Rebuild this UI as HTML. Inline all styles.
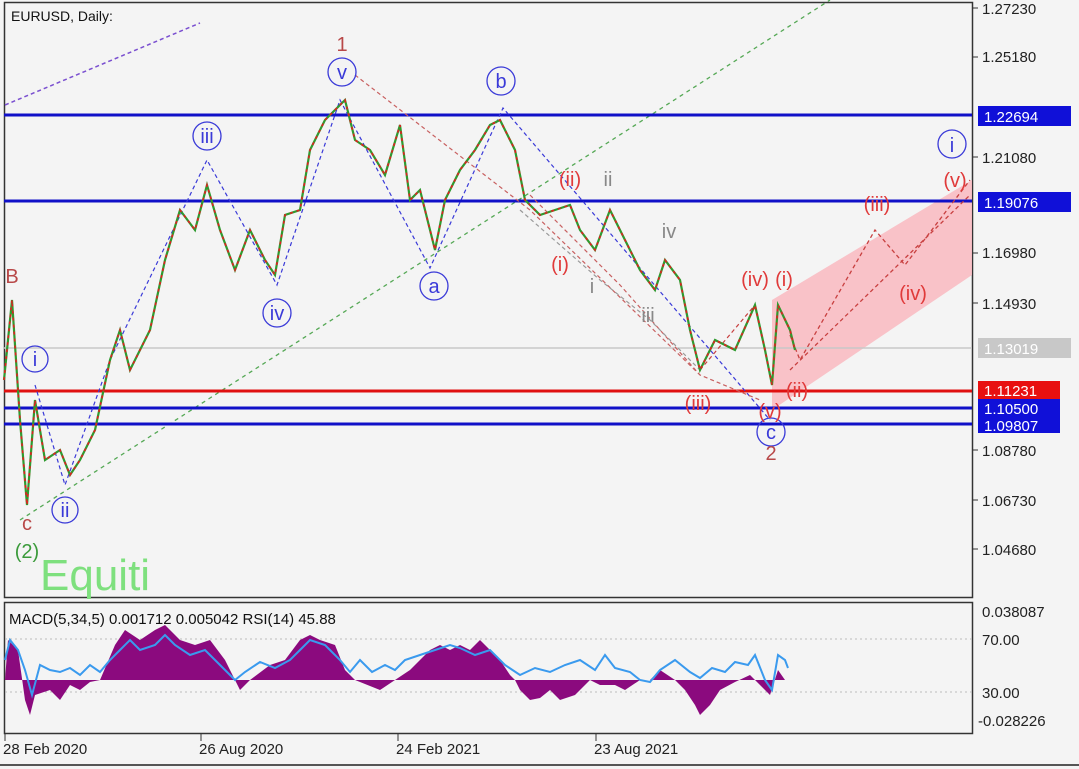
<!DOCTYPE html>
<html><head><meta charset="utf-8"><style>
html,body{margin:0;padding:0;background:#f4f4f4;}
svg{display:block;font-family:"Liberation Sans",sans-serif;}
</style></head><body>
<svg width="1079" height="769" viewBox="0 0 1079 769" xmlns="http://www.w3.org/2000/svg">
<rect width="1079" height="769" fill="#f4f4f4"/>
<!-- frames -->
<rect x="4.5" y="2.5" width="968" height="595" fill="#f4f4f4" stroke="#333" stroke-width="1.5"/>
<rect x="4.5" y="602.5" width="968" height="131" fill="#f4f4f4" stroke="#333" stroke-width="1.5"/>
<line x1="0" y1="765" x2="1079" y2="765" stroke="#555" stroke-width="2"/>
<text x="11" y="21" font-size="14" fill="#111">EURUSD, Daily:</text>
<!-- purple dotted top-left -->
<line x1="5" y1="105" x2="200" y2="23" stroke="#7a4fd0" stroke-width="1.5" stroke-dasharray="4,3"/>
<!-- green dotted channel -->
<line x1="20" y1="520" x2="830" y2="0" stroke="#55a855" stroke-width="1.3" stroke-dasharray="4,4"/>
<line x1="255" y1="380" x2="0" y2="545" stroke="#55a855" stroke-width="1.3" stroke-dasharray="4,4" opacity="0"/>
<!-- pink projection channel -->
<polygon points="772,300 972,180 972,275 772,410" fill="#f9b9c0" opacity="0.85"/>
<!-- horizontal levels -->
<line x1="4" y1="348" x2="972" y2="348" stroke="#c8c8c8" stroke-width="1.5"/>
<line x1="4" y1="115" x2="972" y2="115" stroke="#1010c8" stroke-width="3"/>
<line x1="4" y1="201" x2="972" y2="201" stroke="#1010c8" stroke-width="3"/>
<line x1="4" y1="391" x2="972" y2="391" stroke="#e01010" stroke-width="3"/>
<line x1="4" y1="408" x2="972" y2="408" stroke="#1010c8" stroke-width="3"/>
<line x1="4" y1="424" x2="972" y2="424" stroke="#1010c8" stroke-width="3"/>
<!-- dashed wave lines blue -->
<polyline points="35,385 65,485 110,360 207,160 277,285 340,100 430,268 503,108 770,420" fill="none" stroke="#3a3ad8" stroke-width="1.2" stroke-dasharray="4,3"/>
<!-- red dashed -->
<polyline points="355,75 530,210 700,375 760,400" fill="none" stroke="#c86060" stroke-width="1.2" stroke-dasharray="4,3"/>
<polyline points="530,195 620,285 700,375" fill="none" stroke="#c86060" stroke-width="1.2" stroke-dasharray="4,3"/>
<polyline points="520,210 600,280 650,320 700,370" fill="none" stroke="#999" stroke-width="1.2" stroke-dasharray="4,3"/>
<polyline points="790,335 800,360 875,230 905,265 970,180" fill="none" stroke="#c84040" stroke-width="1.3" stroke-dasharray="4,3"/>
<polyline points="790,370 970,195" fill="none" stroke="#c84040" stroke-width="1.3" stroke-dasharray="4,3"/>
<polyline points="700,370 755,305" fill="none" stroke="#c84040" stroke-width="1.2" stroke-dasharray="4,3"/>
<!-- price -->
<polyline fill="none" stroke="#2f9a2f" stroke-width="2.2" points="4,380 12,300 20,420 27,505 35,400 45,460 60,450 70,475 80,460 95,430 110,360 120,330 130,370 150,330 165,260 180,210 195,230 207,185 220,230 235,270 250,230 265,260 275,275 285,215 300,210 310,150 325,120 335,110 345,100 355,140 370,150 385,175 400,125 410,200 420,190 435,250 445,200 460,170 475,150 490,125 500,120 515,150 525,200 540,215 555,210 570,205 580,230 595,250 610,210 625,240 640,270 655,290 665,260 680,280 690,330 700,370 715,340 735,350 755,305 765,350 772,385 778,305 790,330 795,350"/>
<polyline fill="none" stroke="#e02020" stroke-width="1.6" stroke-dasharray="3,4" points="4,380 12,300 20,420 27,505 35,400 45,460 60,450 70,475 80,460 95,430 110,360 120,330 130,370 150,330 165,260 180,210 195,230 207,185 220,230 235,270 250,230 265,260 275,275 285,215 300,210 310,150 325,120 335,110 345,100 355,140 370,150 385,175 400,125 410,200 420,190 435,250 445,200 460,170 475,150 490,125 500,120 515,150 525,200 540,215 555,210 570,205 580,230 595,250 610,210 625,240 640,270 655,290 665,260 680,280 690,330 700,370 715,340 735,350 755,305 765,350 772,385 778,305 790,330 795,350"/>
<!-- wave labels -->
<g fill="none" stroke="#3a3ad8" stroke-width="1.3">
<circle cx="35" cy="359" r="13"/><circle cx="65" cy="510" r="13"/><circle cx="207" cy="136" r="14"/>
<circle cx="277" cy="313" r="14"/><circle cx="342" cy="72" r="14"/><circle cx="434" cy="286" r="14"/>
<circle cx="501" cy="81" r="14"/><circle cx="771" cy="432" r="14"/><circle cx="952" cy="144" r="14"/>
</g>
<g font-size="20" fill="#3a3ad8" text-anchor="middle">
<text x="35" y="366">i</text><text x="65" y="517">ii</text><text x="207" y="143">iii</text>
<text x="277" y="320">iv</text><text x="342" y="79">v</text><text x="434" y="293">a</text>
<text x="501" y="88">b</text><text x="771" y="439">c</text><text x="952" y="152">i</text>
</g>
<g font-size="20" fill="#b84848" text-anchor="middle">
<text x="342" y="51">1</text><text x="12" y="283">B</text><text x="27" y="530">c</text><text x="771" y="460">2</text>
</g>
<text x="27" y="558" font-size="20" fill="#3a9a3a" text-anchor="middle">(2)</text>
<text x="40" y="590" font-size="44" fill="#7ee07e">Equiti</text>
<g font-size="20" fill="#e03a3a" text-anchor="middle">
<text x="570" y="186">(ii)</text><text x="560" y="271">(i)</text><text x="755" y="286">(iv)</text><text x="784" y="286">(i)</text>
<text x="698" y="410">(iii)</text><text x="797" y="397">(ii)</text><text x="770" y="418">(v)</text>
<text x="877" y="211">(iii)</text><text x="955" y="187">(v)</text><text x="913" y="300">(iv)</text>
</g>
<g font-size="20" fill="#888" text-anchor="middle">
<text x="608" y="186">ii</text><text x="669" y="238">iv</text><text x="592" y="293">i</text><text x="648" y="322">iii</text>
</g>
<!-- price axis -->
<g font-size="15" fill="#222">
<text x="982" y="14">1.27230</text><text x="982" y="62">1.25180</text><text x="982" y="163">1.21080</text>
<text x="982" y="258">1.16980</text><text x="982" y="309">1.14930</text><text x="982" y="456">1.08780</text>
<text x="982" y="506">1.06730</text><text x="982" y="555">1.04680</text>
</g>
<g stroke="#333"><line x1="972" y1="8" x2="978" y2="8"/><line x1="972" y1="57" x2="978" y2="57"/><line x1="972" y1="157" x2="978" y2="157"/><line x1="972" y1="253" x2="978" y2="253"/><line x1="972" y1="303" x2="978" y2="303"/><line x1="972" y1="450" x2="978" y2="450"/><line x1="972" y1="500" x2="978" y2="500"/><line x1="972" y1="549" x2="978" y2="549"/></g>
<rect x="978" y="106" width="93" height="20" fill="#1010d8"/><text x="984" y="122" font-size="15" fill="#fff">1.22694</text>
<rect x="978" y="192" width="93" height="20" fill="#1010d8"/><text x="984" y="208" font-size="15" fill="#fff">1.19076</text>
<rect x="978" y="338" width="93" height="20" fill="#c8c8c8"/><text x="984" y="354" font-size="15" fill="#fff">1.13019</text>
<rect x="978" y="381" width="82" height="18" fill="#e81010"/><text x="984" y="396" font-size="15" fill="#fff">1.11231</text>
<rect x="978" y="399" width="82" height="34" fill="#1010d8"/><text x="984" y="414" font-size="15" fill="#fff">1.10500</text><text x="984" y="431" font-size="15" fill="#fff">1.09807</text>
<!-- indicator -->
<text x="9" y="624" font-size="15" fill="#111">MACD(5,34,5) 0.001712 0.005042 RSI(14) 45.88</text>
<line x1="5" y1="639" x2="972" y2="639" stroke="#bbb" stroke-dasharray="2,3"/>
<line x1="5" y1="692" x2="972" y2="692" stroke="#bbb" stroke-dasharray="2,3"/>
<path d="M5,680 L8,640 18,650 25,700 30,715 35,695 50,690 60,700 70,685 80,690 90,682 L100,680 115,645 125,630 140,640 155,630 165,625 180,640 195,645 210,640 225,660 235,680 240,690 250,680 270,665 285,660 300,640 310,635 320,640 335,645 345,670 355,680 380,690 395,680 410,670 420,660 430,650 440,645 450,650 460,645 470,650 480,640 490,650 500,660 510,675 515,680 520,690 530,700 540,698 550,690 560,700 575,695 590,680 600,685 615,685 625,690 640,680 650,680 660,670 675,680 685,690 695,705 700,715 710,705 720,690 735,682 750,675 770,695 778,670 785,680 785,680 Z" fill="#8b0a7e"/>
<polyline fill="none" stroke="#3a9aee" stroke-width="2" points="5,660 10,640 18,650 25,670 32,695 40,665 50,670 60,672 70,668 80,675 90,665 100,672 110,660 120,650 130,640 140,650 155,645 165,635 175,645 190,655 205,650 215,660 225,670 235,680 245,672 260,662 275,668 290,660 300,650 310,640 325,645 340,660 350,672 360,660 372,672 385,665 395,670 405,660 420,655 435,650 450,645 460,648 475,655 490,650 505,665 520,675 535,668 550,672 565,665 580,660 595,670 605,655 615,668 630,672 640,680 650,682 660,670 675,660 690,672 700,678 712,668 725,672 735,662 748,665 755,655 765,680 772,690 778,655 785,660 788,668"/>
<text x="982" y="617" font-size="15" fill="#222">0.038087</text>
<text x="982" y="645" font-size="15" fill="#222">70.00</text>
<text x="982" y="698" font-size="15" fill="#222">30.00</text>
<text x="978" y="726" font-size="15" fill="#222">-0.028226</text>
<!-- time axis -->
<g stroke="#333"><line x1="5" y1="733" x2="5" y2="741"/><line x1="201" y1="733" x2="201" y2="741"/><line x1="398" y1="733" x2="398" y2="741"/><line x1="596" y1="733" x2="596" y2="741"/></g>
<g font-size="15" fill="#222">
<text x="3" y="754">28 Feb 2020</text><text x="199" y="754">26 Aug 2020</text><text x="396" y="754">24 Feb 2021</text><text x="594" y="754">23 Aug 2021</text>
</g>
</svg>
</body></html>
